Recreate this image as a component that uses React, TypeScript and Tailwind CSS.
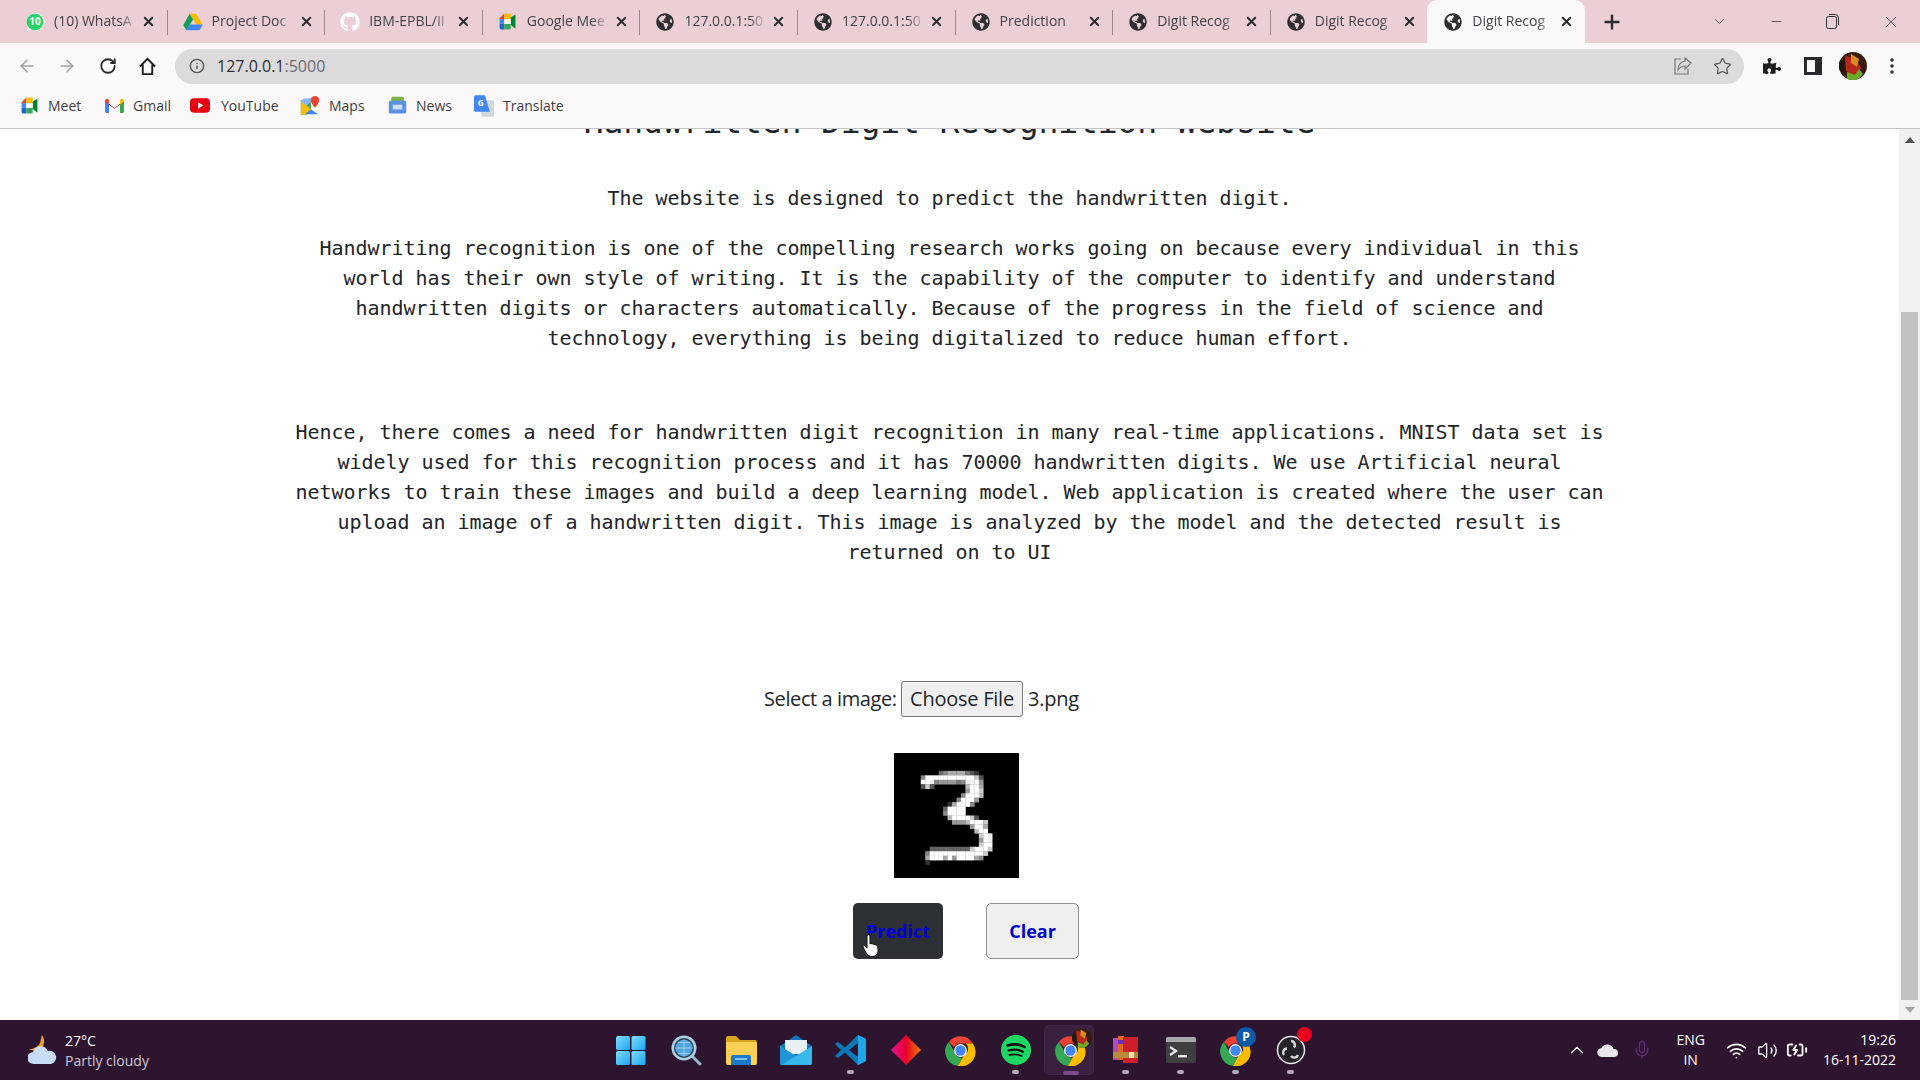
import React from "react";
import { ArrowLeft, ArrowRight, RotateCw, Info, Star, X, Plus, ChevronDown, ChevronUp, Minus, Mic, Wifi, Volume2, BatteryCharging } from "lucide-react";
import { FaGlobeAmericas, FaGithub, FaPuzzlePiece } from "react-icons/fa";

const sans = "font-['Open_Sans','Noto_Sans',sans-serif]";

const Meet = ({ s = 20 }: { s?: number }) => (
  <svg width={s} height={s} viewBox="0 0 24 24">
    <path d="M2 8l6-6v7H2z" fill="#ea4335" />
    <path d="M8 2h8v7H8z" fill="#fbbc04" />
    <path d="M2 9h6v6H2z" fill="#4285f4" />
    <path d="M2 15h6v7H4a2 2 0 0 1-2-2z" fill="#1967d2" />
    <path d="M8 15h8v7H8z" fill="#34a853" />
    <path d="M16 7l6-4v18l-6-5z" fill="#00832d" />
    <path d="M8 9h8v6H8z" fill="#fff" />
  </svg>
);
const Drive = () => (
  <svg width="20" height="18" viewBox="0 0 24 22">
    <path d="M8 1h8l8 13h-8z" fill="#fbbc04" />
    <path d="M8 1L0 15l4 6 8-13z" fill="#0f9d58" />
    <path d="M4 21h16l4-7H8z" fill="#4285f4" />
  </svg>
);
const Whats = () => (
  <svg width="20" height="20" viewBox="0 0 24 24">
    <path d="M2 23l2-6a10.5 10.5 0 1 1 4 4z" fill="#fff" />
    <circle cx="12" cy="12" r="10" fill="#25d366" />
    <text x="12" y="16" textAnchor="middle" fontSize="12" fontWeight="700" fill="#fff" fontFamily="Open Sans">10</text>
  </svg>
);
const Chrome = ({ s = 31 }: { s?: number }) => (
  <svg width={s} height={s} viewBox="0 0 48 48">
    <path d="M24 2a22 22 0 0 1 19 11H24a11 11 0 0 0-10 6L6 11A22 22 0 0 1 24 2z" fill="#ea4335" />
    <path d="M6 11l9.5 16.5A11 11 0 0 0 27 35l-7 12.6A22 22 0 0 1 6 11z" fill="#34a853" />
    <path d="M43 13a22 22 0 0 1-23 34.6L29.5 31A11 11 0 0 0 32 13z" fill="#fbbc04" />
    <circle cx="24" cy="24" r="10" fill="#fff" />
    <circle cx="24" cy="24" r="8" fill="#4285f4" />
  </svg>
);
const Avatar = ({ s = 28 }: { s?: number }) => (
  <svg width={s} height={s} viewBox="0 0 28 28">
    <defs><clipPath id="av"><circle cx="14" cy="14" r="14" /></clipPath></defs>
    <g clipPath="url(#av)">
      <rect width="28" height="28" fill="#3a1a10" />
      <path d="M6 4l10 2 6 10-8 10-7-8z" fill="#b5281a" />
      <path d="M12 2l8 5-2 8-6-4z" fill="#d98a20" />
      <path d="M8 20l8 3 4-6 4 5-6 6H8z" fill="#6cab2a" />
      <path d="M0 8l6 2-1 10-5-2z" fill="#20180f" />
    </g>
  </svg>
);

const Globe = () => <FaGlobeAmericas size={18} color="#2f2f33" />;

const tabs = [
  { t: "(10) WhatsA", i: <Whats /> },
  { t: "Project Doc", i: <Drive /> },
  { t: "IBM-EPBL/II", i: <FaGithub size={20} color="#ffffff" /> },
  { t: "Google Mee", i: <Meet s={19} /> },
  { t: "127.0.0.1:50", i: <Globe /> },
  { t: "127.0.0.1:50", i: <Globe /> },
  { t: "Prediction", i: <Globe /> },
  { t: "Digit Recog", i: <Globe /> },
  { t: "Digit Recog", i: <Globe /> },
];

function Tab({ t, i, active, sep }: { t: string; i: React.ReactNode; active?: boolean; sep?: boolean }) {
  return (
    <div className={`relative flex h-[43px] w-[157.6px] shrink-0 items-center pl-[16px] pr-[10px] ${active ? "rounded-t-[10px] bg-[#faf8f9]" : ""}`}>
      <span className="flex w-[20px] shrink-0 items-center justify-center">{i}</span>
      <span className={`ml-[9px] w-[84px] whitespace-nowrap pb-[2px] text-[14px] text-[#45424a] [mask-image:linear-gradient(to_right,black_78%,rgba(0,0,0,0.3)_92%)] ${sans}`}>{t}</span>
      <X size={15} strokeWidth={3} color="#2a2a2e" className="ml-[3px] shrink-0" />
      {sep && <span className="absolute right-[-1px] top-[10px] h-[25px] w-px bg-[#9a8b8f]" />}
    </div>
  );
}

const bookmarks = [
  { t: "Meet", i: <Meet s={19} />, w: "w-[85px]", g: "gap-[9px]" },
  { t: "Gmail", i: (
    <svg width="19" height="15" viewBox="0 0 24 18"><path d="M0 3l12 9 12-9v13a2 2 0 0 1-2 2h-3V8l-7 5-7-5v10H2a2 2 0 0 1-2-2z" fill="#c5221f" /><path d="M0 3a2.5 2.5 0 0 1 4-2l1 1v6L0 4z" fill="#ea4335" /><path d="M5 8v10H2a2 2 0 0 1-2-2V4z" fill="#4285f4" /><path d="M19 8v10h3a2 2 0 0 0 2-2V4z" fill="#34a853" /><path d="M19 2l1-1a2.5 2.5 0 0 1 4 2v1l-5 4z" fill="#fbbc04" /></svg>
  ), w: "w-[86px]", g: "gap-[9px]" },
  { t: "YouTube", i: (
    <svg width="21" height="15" viewBox="0 0 21 15"><rect width="21" height="15" rx="4" fill="#e60012" /><path d="M8.5 4l5.5 3.5L8.5 11z" fill="#fff" /></svg>
  ), w: "w-[110px]", g: "gap-[11px]" },
  { t: "Maps", i: (
    <svg width="20" height="20" viewBox="0 0 24 24"><path d="M1 5l12-2v18L1 23z" fill="#34a853" /><path d="M1 5l12 11v5L1 23z" fill="#fbbc04" /><path d="M13 16l9 6H6z" fill="#4285f4" /><path d="M5 3h11l-8 9-7-6z" fill="#8ab4f8" /><path d="M18 0a5 5 0 0 1 5 5c0 4-5 9-5 9s-5-5-5-9a5 5 0 0 1 5-5z" fill="#ea4335" /></svg>
  ), w: "w-[87px]", g: "gap-[9px]" },
  { t: "News", i: (
    <svg width="19" height="19" viewBox="0 0 24 24"><rect x="4" y="1" width="16" height="8" rx="2" fill="#7cb342" /><rect x="1" y="6" width="22" height="16" rx="2" fill="#5c8fe6" /><rect x="6" y="11" width="12" height="6" fill="#cfe0fb" /></svg>
  ), w: "w-[87px]", g: "gap-[9px]" },
  { t: "Translate", i: (
    <svg width="20" height="22" viewBox="0 0 24 26"><rect x="9" y="6" width="15" height="20" rx="1" fill="#cfd8dc" /><path d="M2 0h11l6 20H2a2 2 0 0 1-2-2V2a2 2 0 0 1 2-2z" fill="#4285f4" /><text x="8" y="13" textAnchor="middle" fontSize="10" fontWeight="700" fill="#fff" fontFamily="Open Sans">G</text></svg>
  ), w: "w-auto", g: "gap-[9px]" },
];

const digit: [number, number, string][] = [
  [4, 10, "68aaaa753"],
  [5, 6, "8fffffffffffc5"],
  [6, 6, "ffe8999978eef9"],
  [7, 6, "5c50000000bffa"],
  [8, 16, "9ffc"],
  [9, 15, "8fffb"],
  [10, 14, "8fff9"],
  [11, 12, "3afff8"],
  [12, 11, "6ffff"],
  [13, 11, "8ffff"],
  [14, 12, "bffffc5"],
  [15, 13, "999bfffc"],
  [16, 17, "9ffa"],
  [17, 18, "bff"],
  [18, 19, "cfe"],
  [19, 19, "9fe"],
  [20, 19, "cff"],
  [21, 8, "666666666cfffc"],
  [22, 7, "8ffffffffffffc"],
  [23, 7, "afffaf9ffffa8"],
  [24, 7, "3"],
];

function Digit() {
  const rects: React.ReactNode[] = [];
  digit.forEach(([r, c, s]) => {
    s.split("").forEach((h, k) => {
      const v = parseInt(h, 16);
      if (v > 0) {
        const g = v * 17;
        rects.push(<rect key={`${r}-${k}`} x={c + k} y={r} width="1.06" height="1.06" fill={`rgb(${g},${g},${g})`} />);
      }
    });
  });
  return (
    <div className="h-[125px] w-[125px] overflow-hidden bg-black">
      <svg width="125" height="125" viewBox="0 0 28 28" className="block blur-[0.6px]">
        <rect width="28" height="28" fill="#000" />
        {rects}
      </svg>
    </div>
  );
}

const Dot = ({ on }: { on?: boolean }) =>
  on ? <span className="absolute bottom-[5px] h-[4px] w-[16px] rounded-full bg-[#7d4a90]" /> : <span className="absolute bottom-[6px] h-[4px] w-[7px] rounded-full bg-[#b5a6b8]" />;

function Task({ children, dot, active }: { children: React.ReactNode; dot?: boolean; active?: boolean }) {
  return (
    <div className="relative flex h-[60px] w-[55px] items-center justify-center">
      {active && <span className="absolute left-[1px] top-[5px] h-[50px] w-[50px] rounded-[5px] border border-[#40264a] bg-[#3b2140]" />}
      <span className="relative flex items-center justify-center">{children}</span>
      {dot && <Dot on={active} />}
    </div>
  );
}

const Win = () => (
  <svg width="30" height="30" viewBox="0 0 30 30">
    <defs><linearGradient id="w" x1="0" y1="0" x2="1" y2="1"><stop offset="0" stopColor="#7fdcf8" /><stop offset="1" stopColor="#1aa5f5" /></linearGradient></defs>
    <rect x="0" y="1" width="14" height="14" rx="1.5" fill="url(#w)" />
    <rect x="15.5" y="1" width="14" height="14" rx="1.5" fill="url(#w)" />
    <rect x="0" y="16" width="14" height="14" rx="1.5" fill="url(#w)" />
    <rect x="15.5" y="16" width="14" height="14" rx="1.5" fill="url(#w)" />
  </svg>
);
const SearchG = () => (
  <svg width="32" height="32" viewBox="0 0 32 32">
    <path d="M22 22l8 8" stroke="#8fb8c8" strokeWidth="3" strokeLinecap="round" />
    <circle cx="14" cy="14" r="12.5" fill="#a9d3e3" />
    <circle cx="14" cy="14" r="10" fill="#2c3a52" />
    <circle cx="14" cy="14" r="8.6" fill="#4da3dc" />
    <path d="M5.5 14h17M14 5.5v17M8 8.5h12M8 19.5h12" stroke="#9fd2ee" strokeWidth="1" />
  </svg>
);
const Folder = () => (
  <svg width="32" height="30" viewBox="0 0 32 30">
    <path d="M1 3a2 2 0 0 1 2-2h8l4 4h15a2 2 0 0 1 2 2v4H1z" fill="#d9a520" />
    <path d="M1 7h29a2 2 0 0 1 2 2v19a2 2 0 0 1-2 2H3a2 2 0 0 1-2-2z" fill="#fbd053" />
    <path d="M6 30v-8a2 2 0 0 1 2-2h16a2 2 0 0 1 2 2v8z" fill="#1c7ac9" />
    <rect x="10" y="23" width="12" height="2" fill="#7cc4f3" />
  </svg>
);
const Mail = () => (
  <svg width="32" height="30" viewBox="0 0 32 30">
    <path d="M0 11L16 0l16 11v17a2 2 0 0 1-2 2H2a2 2 0 0 1-2-2z" fill="#1573b8" />
    <path d="M5 5h22v14H5z" fill="#f3f6f8" opacity=".95" />
    <path d="M0 11l16 10 16-10v17a2 2 0 0 1-2 2H2a2 2 0 0 1-2-2z" fill="#37b8ea" />
    <path d="M0 11l16 10L2 30a2 2 0 0 1-2-2z" fill="#1e95d6" />
  </svg>
);
const VS = () => (
  <svg width="32" height="32" viewBox="0 0 32 32">
    <path d="M23 1l8 4v22l-8 4-13-12.5L3 24l-3-2 6-6-6-6 3-2 7 5.500z" fill="#0b79b8" />
    <path d="M23 1l8 4v22l-8 4z" fill="#22a5e8" />
    <path d="M23 9l-9 7 9 7z" fill="#2d1530" />
  </svg>
);
const Diamond = () => (
  <svg width="30" height="30" viewBox="0 0 30 30">
    <defs><linearGradient id="d" x1="0" x2="1" y1="0" y2="0"><stop offset="0" stopColor="#e6109a" /><stop offset=".5" stopColor="#e8002a" /><stop offset="1" stopColor="#f07c00" /></linearGradient></defs>
    <path d="M15 0l15 15-15 15L0 15z" fill="url(#d)" />
  </svg>
);
const Spotify = () => (
  <svg width="30" height="30" viewBox="0 0 30 30">
    <circle cx="15" cy="15" r="15" fill="#1ed760" />
    <path d="M6.500 10.500c6-1.800 12.500-1.300 17 1.500" stroke="#111" strokeWidth="2.600" fill="none" strokeLinecap="round" />
    <path d="M7.500 15.500c5-1.400 10.500-1 14.500 1.300" stroke="#111" strokeWidth="2.200" fill="none" strokeLinecap="round" />
    <path d="M8.500 20c4-1 8.500-.8 12 1" stroke="#111" strokeWidth="1.900" fill="none" strokeLinecap="round" />
  </svg>
);
const Rar = () => (
  <svg width="26" height="30" viewBox="0 0 26 30">
    <rect x="0" y="3" width="6" height="22" fill="#b04ac0" />
    <rect x="5" y="1" width="6" height="24" fill="#e06a1c" />
    <rect x="10" y="2" width="15" height="26" fill="#cc1f2b" />
    <rect x="5" y="5" width="6" height="4" fill="#6b2fc0" />
    <rect x="0" y="17" width="25" height="6" fill="#b78a3d" />
    <rect x="16" y="17" width="5" height="6" fill="#f4dfae" />
  </svg>
);
const Term = () => (
  <svg width="30" height="26" viewBox="0 0 30 26">
    <rect width="30" height="26" rx="2" fill="#3f3f42" />
    <path d="M0 2a2 2 0 0 1 2-2h26a2 2 0 0 1 2 2v3H0z" fill="#a9a9ab" />
    <path d="M4 10l6 4-6 4" stroke="#e8e8e8" strokeWidth="2.200" fill="none" />
    <rect x="12" y="18" width="9" height="2.400" fill="#e8e8e8" />
  </svg>
);
const Obs = () => (
  <span className="relative block h-[30px] w-[30px]">
    <svg width="30" height="30" viewBox="0 0 30 30">
      <circle cx="15" cy="15" r="13.500" fill="#26222a" stroke="#e8e8e8" strokeWidth="1.500" />
      <path d="M15 6a4 4 0 0 1 3 6.500M8 20a4 4 0 0 1 3-6.500M22 20a4 4 0 0 1-7 1" fill="none" stroke="#d8d8d8" strokeWidth="2.400" />
    </svg>
    <span className="absolute right-[-6px] top-[-8px] h-[15px] w-[15px] rounded-full bg-[#e8001c]" />
  </span>
);

export default function App() {
  return (
    <div className="flex h-screen w-full flex-col overflow-hidden bg-white">
      {/* tab strip */}
      <div className="flex h-[43px] shrink-0 items-center bg-[#ebcfd4] pl-[9px]">
        {tabs.map((x, n) => (
          <Tab key={n} t={x.t} i={x.i} sep={n < 8} />
        ))}
        <Tab t="Digit Recog" i={<Globe />} active />
        <Plus size={22} strokeWidth={2.6} color="#2a2a2e" className="ml-[16px]" />
        <div className="ml-auto flex items-center">
          <ChevronDown size={17} strokeWidth={1.2} color="#444" className="mr-[41px]" />
          <Minus size={15} strokeWidth={1.2} color="#333" className="mr-[42px]" />
          <svg width="13" height="15" viewBox="0 0 13 15" className="mr-[43px]" fill="none" stroke="#333"><rect x="0.500" y="2.500" width="10" height="12" rx="2" /><path d="M3 .5h6a3.500 3.500 0 0 1 3.500 3.500v7" /></svg>
          <X size={18} strokeWidth={1} color="#333" className="mr-[20px]" />
        </div>
      </div>

      {/* toolbar */}
      <div className="flex h-[45px] shrink-0 items-center bg-[#faf8f9] pt-[1px]">
        <div className="flex w-[175px] items-center pl-[17px]">
          <ArrowLeft size={20} strokeWidth={1.8} color="#a09fa3" className="mr-[20px]" />
          <ArrowRight size={20} strokeWidth={1.8} color="#a09fa3" className="mr-[22px]" />
          <RotateCw size={18} strokeWidth={2.4} color="#2a2a2e" className="mr-[21px]" />
          <svg width="19" height="19" viewBox="0 0 20 20" fill="none" stroke="#1f1f22" strokeWidth="2"><path d="M2 10l8-8 8 8M5 8v10h10V8" /></svg>
        </div>
        <div className="flex h-[35px] w-[1569px] items-center rounded-full bg-[#dcdadb] pl-[14px] pr-[12px]">
          <Info size={16} strokeWidth={2} color="#55545a" />
          <span className={`ml-[12px] text-[16px] text-[#2f2e33] ${sans}`}>127.0.0.1<span className="text-[#6e6c72]">:5000</span></span>
          <svg width="20" height="20" viewBox="0 0 20 20" fill="none" stroke="#77767b" strokeWidth="1.200" className="ml-auto mr-[20px]"><path d="M8 3H2v15h13v-5" /><path d="M18 7l-6-5v3C7 6 5 10 5 14c2-3 4-4 7-4v3z" /></svg>
          <Star size={19} strokeWidth={1.500} color="#55545a" />
        </div>
        <div className="flex flex-1 items-center pl-[19px]">
          <FaPuzzlePiece size={18} color="#1f1f22" className="mr-[23px]" />
          <span className="mr-[17px] block h-[18px] w-[18px] border-[3px] border-r-[7px] border-[#2a2a2e]" />
          <Avatar />
          <svg width="4" height="16" viewBox="0 0 4 16" fill="#333" className="ml-[23px]"><circle cx="2" cy="2" r="1.800" /><circle cx="2" cy="8" r="1.800" /><circle cx="2" cy="14" r="1.800" /></svg>
        </div>
      </div>

      {/* bookmarks */}
      <div className={`flex h-[41px] shrink-0 items-center border-b border-[#c4c3c6] bg-[#faf8f9] pb-[5px] pl-[19px] text-[14px] text-[#3e3d42] ${sans}`}>
        {bookmarks.map((b) => (
          <div key={b.t} className={`flex items-center ${b.g} ${b.w}`}>
            <span className="flex w-[20px] justify-center">{b.i}</span>
            <span>{b.t}</span>
          </div>
        ))}
      </div>

      {/* page */}
      <div className="flex min-h-0 flex-1">
        <main className="min-w-0 flex-1 overflow-hidden">
          <h1 className="mt-[-27px] mb-[41px] text-center font-['DejaVu_Sans_Mono',monospace] text-[33px] leading-[40px] tracking-[-0.1px] text-[#212529]">Handwritten Digit Recognition Website</h1>
          <div className="mx-auto w-[1320px] text-center font-['DejaVu_Sans_Mono',monospace] text-[20px] leading-[30px] tracking-[-0.04px] text-[#212529]">
            <p className="mb-[20px]">The website is designed to predict the handwritten digit.</p>
            <p className="mb-[64px]">Handwriting recognition is one of the compelling research works going on because every individual in this world has their own style of writing. It is the capability of the computer to identify and understand handwritten digits or characters automatically. Because of the progress in the field of science and technology, everything is being digitalized to reduce human effort.</p>
            <p className="mb-[114px]">Hence, there comes a need for handwritten digit recognition in many real-time applications. MNIST data set is widely used for this recognition process and it has 70000 handwritten digits. We use Artificial neural networks to train these images and build a deep learning model. Web application is created where the user can upload an image of a handwritten digit. This image is analyzed by the model and the detected result is returned on to UI</p>
          </div>
          <div className={`flex h-[36px] items-center justify-center text-[20px] tracking-[-0.25px] text-[#212529] ${sans}`}>
            <span className="w-[137px] whitespace-nowrap tracking-[-0.4px]">Select a image:</span>
            <button className="h-[36px] w-[122px] rounded-[3px] border border-[#767676] bg-[#efefef] text-[#212529]">Choose File</button>
            <span className="w-[112px] pl-[5px]">3.png</span>
          </div>
          <div className="ml-[14px] mt-[36px] flex justify-center">
            <Digit />
          </div>
          <div className={`ml-[33px] mt-[25px] flex justify-center gap-[43px] text-[18px] font-bold text-[#0000d0] ${sans}`}>
            <button className="relative h-[56px] w-[90px] rounded-[5px] bg-[#2d3035]">
              Predict
              <svg width="18" height="24" viewBox="0 0 18 24" className="absolute left-[9px] top-[31px]">
                <path d="M5 2a1.500 1.500 0 0 1 3 0v8l1-.5 2 .5 2 .5 2 1c1 1 1 3 1 5 0 3-2 6-6 6-3 0-5-2-6-4L1 13c0-1 1-2 2-1l2 2z" fill="#fff" stroke="#111" strokeWidth="1" />
              </svg>
            </button>
            <button className="h-[56px] w-[93px] rounded-[5px] border border-[#8f8f8f] bg-[#efefef]">Clear</button>
          </div>
        </main>
        <aside className="relative flex w-[21px] shrink-0 flex-col items-center bg-[#f1f1f1]">
          <svg width="10" height="6" viewBox="0 0 10 6" className="mt-[8px]"><path d="M5 0l5 6H0z" fill="#505050" /></svg>
          <div className="mt-[169px] h-[688px] w-[17px] bg-[#c1c1c1]" />
          <svg width="10" height="6" viewBox="0 0 10 6" className="mt-[7px]"><path d="M5 6l5-6H0z" fill="#a3a3a3" /></svg>
        </aside>
      </div>

      {/* taskbar */}
      <div className={`grid h-[60px] shrink-0 grid-cols-[1fr_auto_1fr] items-center bg-[#2d1530] ${sans}`}>
        <div className="flex items-center pl-[28px]">
          <svg width="30" height="32" viewBox="0 0 30 32">
            <path d="M14 1c3 4 3 10-1 14-3 2-8 2-12 0 4 0 9-2 11-6 1-3 1-5 2-8z" fill="#f09a32" />
            <path d="M6 30a6 6 0 0 1-1-12 8 8 0 0 1 15-1 6.500 6.500 0 0 1 3 13z" fill="#c9dcf5" />
          </svg>
          <div className="ml-[7px] pt-[1px] text-[14px] leading-[20px]">
            <div className="text-white">27°C</div>
            <div className="text-[#cfc4d2]">Partly cloudy</div>
          </div>
        </div>
        <div className="ml-[1px] flex">
          <Task><Win /></Task>
          <Task><SearchG /></Task>
          <Task><Folder /></Task>
          <Task><Mail /></Task>
          <Task dot><VS /></Task>
          <Task><Diamond /></Task>
          <Task><Chrome /></Task>
          <Task dot><Spotify /></Task>
          <Task dot active>
            <Chrome />
            <span className="absolute right-[-6px] top-[-7px]"><Avatar s={20} /></span>
          </Task>
          <Task dot><Rar /></Task>
          <Task dot><Term /></Task>
          <Task dot>
            <Chrome />
            <span className="absolute right-[-5px] top-[-8px] flex h-[20px] w-[20px] items-center justify-center rounded-full bg-[#0d5aa7] text-[12px] font-bold text-white">P</span>
          </Task>
          <Task dot><Obs /></Task>
        </div>
        <div className="flex items-center justify-end pr-[24px] text-[14px] text-white">
          <ChevronUp size={22} strokeWidth={1.200} className="mr-[9px]" />
          <svg width="22" height="14" viewBox="0 0 22 14" className="mr-[13px]"><path d="M5 14a4.500 4.500 0 0 1-.5-9 6.500 6.500 0 0 1 12 1 4 4 0 0 1 1 8z" fill="#e9e6ea" /></svg>
          <Mic size={20} strokeWidth={1.500} color="#6a2d80" className="mr-[24px]" />
          <div className="mr-[21px] text-center leading-[20px]"><div>ENG</div><div>IN</div></div>
          <Wifi size={21} strokeWidth={2} className="mr-[10px]" />
          <Volume2 size={21} strokeWidth={1.500} className="mr-[8px]" />
          <BatteryCharging size={22} strokeWidth={2} className="mr-[15px]" />
          <div className="text-right leading-[20px]"><div>19:26</div><div>16-11-2022</div></div>
        </div>
      </div>
    </div>
  );
}
